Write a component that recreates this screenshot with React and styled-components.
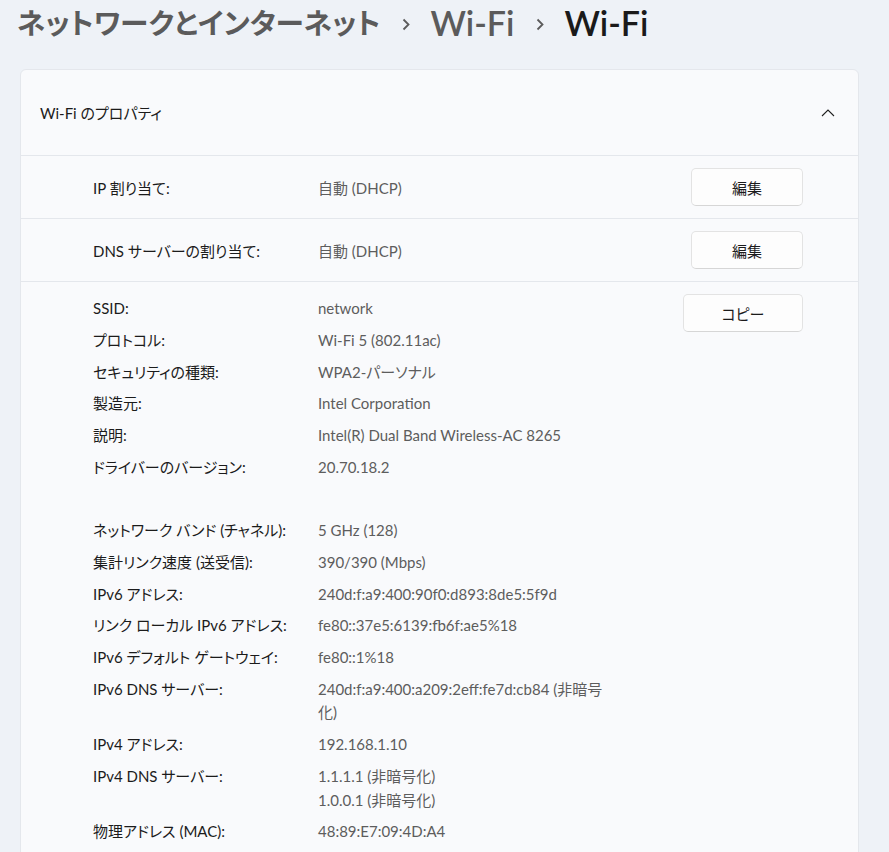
import React from "react";
import styled, {createGlobalStyle} from "styled-components";

const GlobalStyle = createGlobalStyle`
    body {
        margin: 0;
        background: #eef2f7;
        font-family: Lato, "Noto Sans CJK JP", sans-serif;
        font-feature-settings: "palt";
        color: #1b1b1b;
    }
`;

const details = [
    {label: "SSID:", value: ["network"]},
    {label: "プロトコル:", value: ["Wi-Fi 5 (802.11ac)"]},
    {label: "セキュリティの種類:", value: ["WPA2-パーソナル"]},
    {label: "製造元:", value: ["Intel Corporation"]},
    {label: "説明:", value: ["Intel(R) Dual Band Wireless-AC 8265"]},
    {label: "ドライバーのバージョン:", value: ["20.70.18.2"]},
    {label: "ネットワーク バンド (チャネル):", value: ["5 GHz (128)"], spaced: true},
    {label: "集計リンク速度 (送受信):", value: ["390/390 (Mbps)"]},
    {label: "IPv6 アドレス:", value: ["240d:f:a9:400:90f0:d893:8de5:5f9d"]},
    {label: "リンク ローカル IPv6 アドレス:", value: ["fe80::37e5:6139:fb6f:ae5%18"]},
    {label: "IPv6 デフォルト ゲートウェイ:", value: ["fe80::1%18"]},
    {
        label: "IPv6 DNS サーバー:",
        value: ["240d:f:a9:400:a209:2eff:fe7d:cb84 (非暗号化)"],
    },
    {label: "IPv4 アドレス:", value: ["192.168.1.10"]},
    {label: "IPv4 DNS サーバー:", value: ["1.1.1.1 (非暗号化)", "1.0.0.1 (非暗号化)"]},
    {label: "物理アドレス (MAC):", value: ["48:89:E7:09:4D:A4"]},
];

function Chevron() {
    return (
        <Sep width="10" height="13" viewBox="0 0 10 13">
            <path d="M2.5 1.5 L7.5 6.5 L2.5 11.5" fill="none" stroke="currentColor" strokeWidth="1.8" />
        </Sep>
    );
}

function App() {
    return (
        <>
            <GlobalStyle />
            <Page>
                <Breadcrumb>
                    <Crumb $jp>ネットワークとインターネット</Crumb>
                    <Chevron />
                    <Crumb>Wi-Fi</Crumb>
                    <Chevron />
                    <Crumb $current>Wi-Fi</Crumb>
                </Breadcrumb>

                <Card>
                    <CardHeader>
                        <span>Wi-Fi のプロパティ</span>
                        <svg width="14" height="9" viewBox="0 0 14 9">
                            <path d="M1 8 L7 2 L13 8" fill="none" stroke="#222" strokeWidth="1.1" />
                        </svg>
                    </CardHeader>

                    <Row>
                        <Label>IP 割り当て:</Label>
                        <Value>自動 (DHCP)</Value>
                        <Button>編集</Button>
                    </Row>
                    <Row>
                        <Label>DNS サーバーの割り当て:</Label>
                        <Value>自動 (DHCP)</Value>
                        <Button>編集</Button>
                    </Row>

                    <DetailBlock>
                        <DetailList>
                            {details.map((d) => (
                                <React.Fragment key={d.label}>
                                    <DetailLabel $spaced={d.spaced}>{d.label}</DetailLabel>
                                    <DetailValue $spaced={d.spaced}>
                                        {d.value.map((v) => (
                                            <div key={v}>{v}</div>
                                        ))}
                                    </DetailValue>
                                </React.Fragment>
                            ))}
                        </DetailList>
                        <Button $wide>コピー</Button>
                    </DetailBlock>
                </Card>
            </Page>
        </>
    );
}

const Page = styled.div`
    padding: 0 30px 0 20px;
`;

const Breadcrumb = styled.div`
    display: flex;
    align-items: center;
    height: 46px;
    margin: 0 0 23px -3px;
`;

const Crumb = styled.span`
    font-family: Lato, "Noto Sans CJK JP", sans-serif;
    font-size: ${(p) => (p.$jp ? "28.7px" : "34px")};
    font-weight: 600;
    line-height: 46px;
    color: ${(p) => (p.$current ? "#1a1a1a" : "#5b5b5b")};
`;

const Sep = styled.svg`
    color: #5b5b5b;
    margin: 0 19px 0 21px;
    position: relative;
    top: 1px;
`;

const Card = styled.div`
    background: #f9fafc;
    border: 1px solid #e4e7ec;
    border-radius: 6px;
    overflow: hidden;
`;

const CardHeader = styled.div`
    display: flex;
    align-items: center;
    justify-content: space-between;
    height: 85px;
    padding: 0 23px 0 19px;
    font-size: 15px;
    border-bottom: 1px solid #e4e7ec;
`;

const Row = styled.div`
    display: grid;
    grid-template-columns: 225px 1fr auto;
    align-items: center;
    height: 62px;
    padding: 0 55px 0 72px;
    border-bottom: 1px solid #e4e7ec;
    font-size: 15px;
`;

const Label = styled.div`
    color: #1b1b1b;
`;

const Value = styled.div`
    color: #5d5d5d;
`;

const Button = styled.button`
    width: ${(p) => (p.$wide ? "120px" : "112px")};
    height: 38px;
    background: #fdfdfd;
    border: 1px solid #e3e3e3;
    border-bottom-color: #d6d6d6;
    border-radius: 5px;
    font-family: "Noto Sans CJK JP", sans-serif;
    font-feature-settings: "palt";
    font-size: 15px;
    color: #1b1b1b;
`;

const DetailBlock = styled.div`
    display: flex;
    justify-content: space-between;
    align-items: flex-start;
    padding: 12px 55px 60px 72px;
`;

const DetailList = styled.div`
    display: grid;
    grid-template-columns: 225px 296px;
    row-gap: 8.3px;
    padding-top: 3px;
    font-size: 15px;
    line-height: 23.5px;
`;

const DetailLabel = styled.div`
    color: #1b1b1b;
    margin-top: ${(p) => (p.$spaced ? "31.2px" : "0")};
`;

const DetailValue = styled.div`
    color: #5d5d5d;
    margin-top: ${(p) => (p.$spaced ? "31.2px" : "0")};
`;

export default App;
